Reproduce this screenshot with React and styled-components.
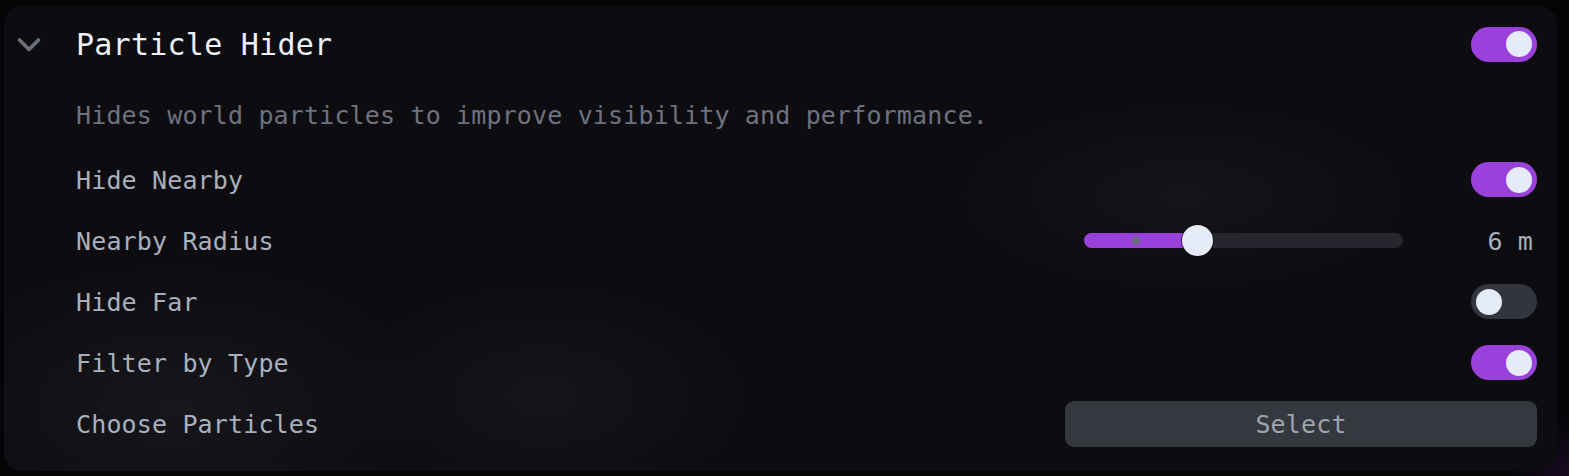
import React, { useState } from "react";
import styled, { createGlobalStyle } from "styled-components";

const GlobalStyle = createGlobalStyle`
  html, body {
    margin: 0;
    padding: 0;
    background: #050507;
  }
  body {
    font-family: "DejaVu Sans Mono", "Liberation Mono", monospace;
  }
`;

const Toggle = ({ on, onChange }) => (
  <ToggleTrack on={on ? 1 : 0} onClick={() => onChange(!on)}>
    <ToggleKnob on={on ? 1 : 0} />
  </ToggleTrack>
);

const Slider = ({ value, min, max, marker }) => {
  const pct = ((value - min) / (max - min)) * 100;
  const markerPct = ((marker - min) / (max - min)) * 100;
  return (
    <SliderTrack>
      <SliderFill style={{ width: `${pct}%` }} />
      <SliderMarker style={{ left: `${markerPct}%` }} />
      <SliderThumb style={{ left: `${pct}%` }} />
    </SliderTrack>
  );
};

export default function App() {
  const [settings, setSettings] = useState({
    enabled: true,
    hideNearby: true,
    hideFar: false,
    filterByType: true,
  });
  const set = (name) => (value) =>
    setSettings((prev) => ({ ...prev, [name]: value }));

  return (
    <Page>
      <GlobalStyle />
      <Panel>
        <Header>
          <Chevron viewBox="0 0 24 14" width="24" height="14">
            <polyline
              points="2.5,2 12,11.5 21.5,2"
              fill="none"
              stroke="#6c707c"
              strokeWidth="3.6"
              strokeLinecap="round"
              strokeLinejoin="round"
            />
          </Chevron>
          <Title>Particle Hider</Title>
          <Toggle on={settings.enabled} onChange={set("enabled")} />
        </Header>
        <Body>
          <Description>
            Hides world particles to improve visibility and performance.
          </Description>
          <Row>
            <Label>Hide Nearby</Label>
            <Toggle on={settings.hideNearby} onChange={set("hideNearby")} />
          </Row>
          <Row>
            <Label>Nearby Radius</Label>
            <SliderGroup>
              <Slider value={6} min={1} max={15} marker={3.3} />
              <Value>6 m</Value>
            </SliderGroup>
          </Row>
          <Row>
            <Label>Hide Far</Label>
            <Toggle on={settings.hideFar} onChange={set("hideFar")} />
          </Row>
          <Row>
            <Label>Filter by Type</Label>
            <Toggle on={settings.filterByType} onChange={set("filterByType")} />
          </Row>
          <Row>
            <Label>Choose Particles</Label>
            <SelectButton>Select</SelectButton>
          </Row>
        </Body>
      </Panel>
    </Page>
  );
}

const Page = styled.div`
  width: 1569px;
  height: 476px;
  padding: 6px 12px 0 4px;
  box-sizing: border-box;
  background: radial-gradient(
      circle at 100% 100%,
      rgba(120, 40, 160, 0.18),
      rgba(0, 0, 0, 0) 60px
    ),
    #050507;
  overflow: hidden;
`;

const Panel = styled.section`
  width: 1553px;
  height: 465px;
  box-sizing: border-box;
  border-radius: 18px;
  background: radial-gradient(
      ellipse 260px 140px at 170px 400px,
      rgba(40, 40, 46, 0.35),
      rgba(0, 0, 0, 0)
    ),
    radial-gradient(
      ellipse 200px 110px at 540px 390px,
      rgba(36, 36, 42, 0.35),
      rgba(0, 0, 0, 0)
    ),
    radial-gradient(
      ellipse 220px 90px at 1180px 190px,
      rgba(34, 34, 40, 0.35),
      rgba(0, 0, 0, 0)
    ),
    #0d0d11;
  padding: 12px 20px 0 13px;
`;

const Header = styled.div`
  display: flex;
  align-items: center;
  height: 52px;
`;

const Chevron = styled.svg`
  flex: none;
  margin-top: 2px;
`;

const Title = styled.h2`
  flex: 1;
  margin: 2px 0 0 35px;
  font-family: "DejaVu Sans Mono", "Liberation Mono", monospace;
  font-weight: 400;
  font-size: 30px;
  letter-spacing: 0.25px;
  line-height: 36px;
  color: #eef1f8;
`;

const Body = styled.div`
  padding-left: 59px;
`;

const Description = styled.p`
  margin: 31px 0 18px;
  font-size: 25px;
  letter-spacing: 0.15px;
  line-height: 30px;
  color: #6d727e;
`;

const Row = styled.div`
  display: flex;
  align-items: center;
  justify-content: space-between;
  height: 61px;
`;

const Label = styled.span`
  padding-top: 2px;
  font-size: 25px;
  letter-spacing: 0.15px;
  line-height: 30px;
  color: #a9b0bd;
`;

const ToggleTrack = styled.div`
  position: relative;
  flex: none;
  width: 66px;
  height: 35px;
  border-radius: 18px;
  background: ${({ on }) => (on ? "#9a40db" : "#33353e")};
  cursor: pointer;
`;

const ToggleKnob = styled.div`
  position: absolute;
  top: 4.5px;
  left: ${({ on }) => (on ? "35px" : "5px")};
  width: 26px;
  height: 26px;
  border-radius: 50%;
  background: #e6ebf8;
`;

const SliderGroup = styled.div`
  display: flex;
  align-items: center;
`;

const SliderTrack = styled.div`
  position: relative;
  width: 319px;
  height: 15px;
  border-radius: 8px;
  background: #25262e;
`;

const SliderFill = styled.div`
  height: 100%;
  border-radius: 8px 0 0 8px;
  background: #9a40db;
`;

const SliderMarker = styled.div`
  position: absolute;
  top: 50%;
  width: 8px;
  height: 8px;
  margin: -4px 0 0 -4px;
  border-radius: 50%;
  background: #6e6f78;
`;

const SliderThumb = styled.div`
  position: absolute;
  top: 50%;
  width: 31px;
  height: 31px;
  margin: -15.5px 0 0 -15.5px;
  box-sizing: border-box;
  border-radius: 50%;
  background: #e6ebf8;
  box-shadow: 0 0 0 1px rgba(10, 10, 14, 0.7);
`;

const Value = styled.span`
  width: 130px;
  padding: 2px 4px 0 0;
  text-align: right;
  font-size: 25px;
  letter-spacing: 0.15px;
  line-height: 30px;
  color: #a9b0bd;
`;

const SelectButton = styled.button`
  width: 472px;
  height: 46px;
  padding-top: 2px;
  border: none;
  border-radius: 9px;
  background: #363840;
  font-family: "DejaVu Sans Mono", "Liberation Mono", monospace;
  font-size: 25px;
  letter-spacing: 0.15px;
  color: #9ea3ad;
  cursor: pointer;
`;
